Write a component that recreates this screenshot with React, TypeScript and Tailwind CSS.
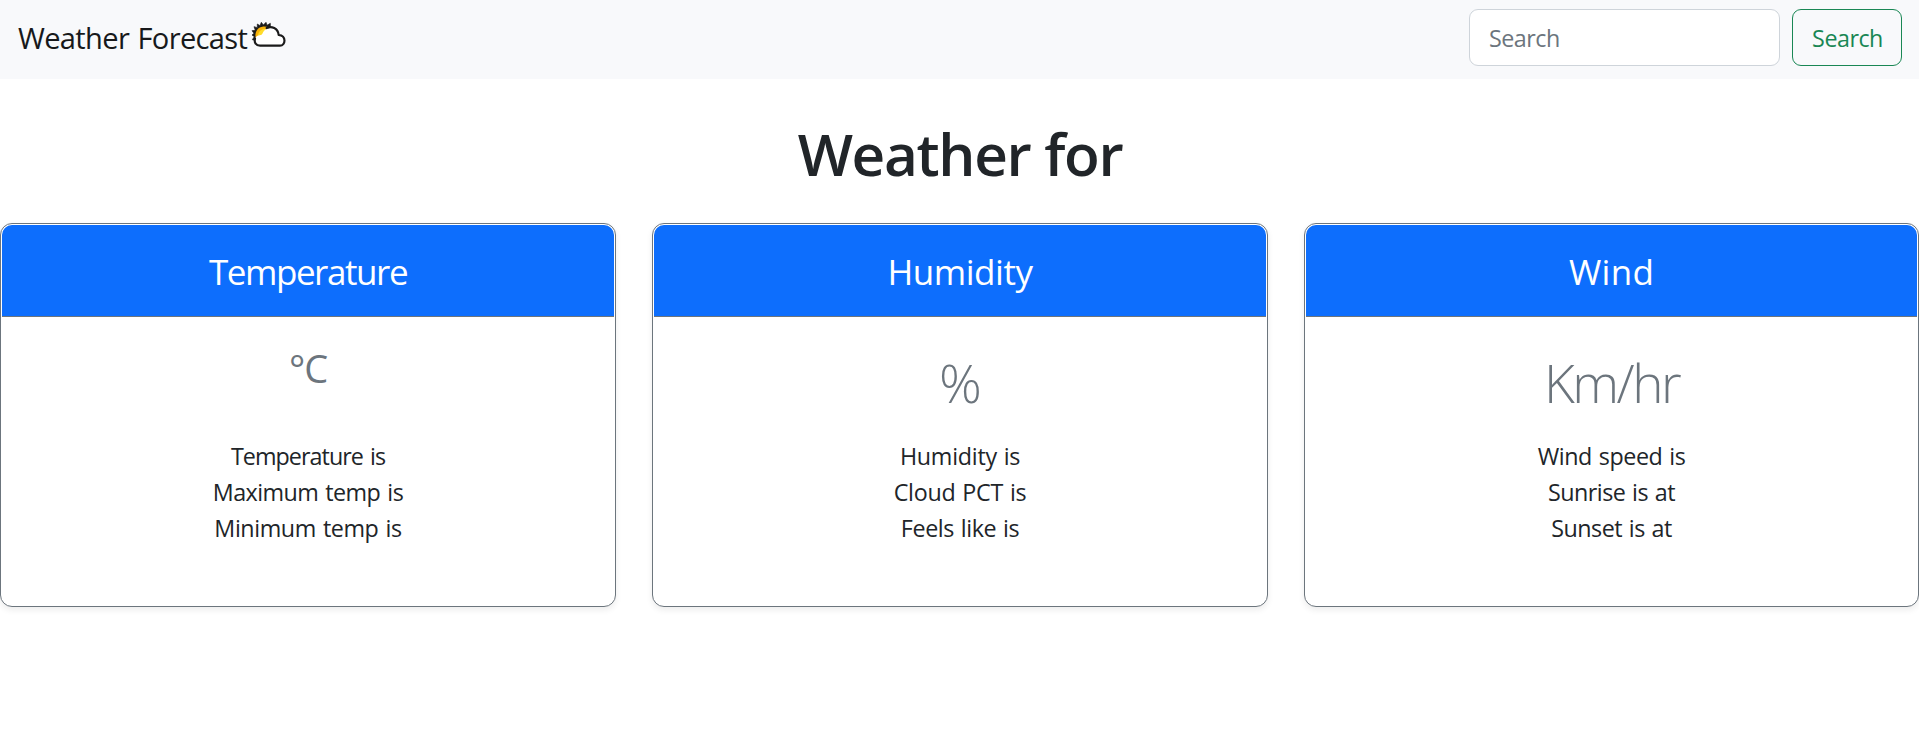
type Line = { text: string; className: string };
type Card = { title: Line; value: Line; lines: Line[] };

const cards: Card[] = [
  {
    title: { text: "Temperature", className: "tracking-[-1.44px]" },
    value: { text: "°C", className: "mt-7 mb-[46px] h-[47px] text-[38px] leading-[47px] tracking-[-1px]" },
    lines: [
      { text: "Temperature is", className: "tracking-[-0.95px] [word-spacing:2px]" },
      { text: "Maximum temp is", className: "tracking-[-0.55px] [word-spacing:1.5px]" },
      { text: "Minimum temp is", className: "tracking-[-0.43px] [word-spacing:1.5px]" },
    ],
  },
  {
    title: { text: "Humidity", className: "tracking-[-0.47px]" },
    value: { text: "%", className: "mt-[33px] mb-[23px] h-[65px] pl-px text-[53px] leading-[65px] font-light" },
    lines: [
      { text: "Humidity is", className: "tracking-[-0.26px] [word-spacing:1px]" },
      { text: "Cloud PCT is", className: "tracking-[-0.25px] [word-spacing:1px]" },
      { text: "Feels like is", className: "tracking-[-0.38px] [word-spacing:1px]" },
    ],
  },
  {
    title: { text: "Wind", className: "tracking-[0.3px]" },
    value: {
      text: "Km/hr",
      className: "mt-[33px] mb-[23px] h-[65px] text-[53px] leading-[65px] font-light tracking-[-2.5px]",
    },
    lines: [
      { text: "Wind speed is", className: "tracking-[-0.42px] [word-spacing:1.2px]" },
      { text: "Sunrise is at", className: "tracking-[-0.5px] [word-spacing:1.2px]" },
      { text: "Sunset is at", className: "tracking-[-0.5px] [word-spacing:1.2px]" },
    ],
  },
];

function SunCloud() {
  return (
    <svg viewBox="33 30 108 84" className="mt-1 ml-1 h-7 w-9 shrink-0" aria-hidden="true">
      <path
        d="M44 91 L37 89 L43 80 L36 75 L42 70 L36 62 L46 61 L42 50 L52 53 L52 42 L60 47 L64 37 L70 45 L78 37 L81 46 L91 40 L91 54 L70 78 Z"
        fill="#1b1b1b"
        stroke="#1b1b1b"
        strokeWidth="2"
        strokeLinejoin="round"
      />
      <path d="M47 83 C44 68 51 52 67 50 C74 49 81 50 87 53 L66 80 Z" fill="#f9b208" />
      <path d="M54 78 C54 66 62 57 76 56 L80 60 L64 80 Z" fill="#ffdc2b" />
      <path
        d="M60 107 C39 107 38 78 59 76 C64 76 66 74 68 70 C73 50 112 45 116 75 C141 76 138 107 120 107 Z"
        fill="#fff"
      />
      <path
        d="M80 54 C94 47 114 54 116 75 C140 77 137 107 120 107 H60 C48 107 42 98 45 86"
        fill="none"
        stroke="#1b1b1b"
        strokeWidth="6.5"
        strokeLinecap="round"
        strokeLinejoin="round"
      />
    </svg>
  );
}

function WeatherCard({ title, value, lines }: Card) {
  return (
    <section className="h-96 rounded-xl border border-[#6c757d] bg-white p-px text-center shadow-[0_3px_6px_rgba(0,0,0,0.075)]">
      <h2
        className={`flex h-[92px] justify-center rounded-t-[10px] border-b border-[#6c757d] bg-[#0d6efd] pt-[25px] text-[35px] leading-[43px] text-white ${title.className}`}
      >
        {title.text}
      </h2>
      <p className={`text-[#6c757d] ${value.className}`}>{value.text}</p>
      <ul>
        {lines.map((line) => (
          <li key={line.text} className={`h-9 leading-9 ${line.className}`}>
            {line.text}
          </li>
        ))}
      </ul>
    </section>
  );
}

export default function App() {
  return (
    <div className="min-h-[750px] bg-white font-['Open_Sans','Noto_Sans',sans-serif] text-[23.3px] text-[#212529]">
      <nav className="flex h-[79px] items-start justify-between bg-[#f8f9fb] pr-[17px] pl-[18px]">
        <div className="flex pt-4 text-[29.1px] leading-[45px] tracking-[-0.67px] text-[#17191b] [word-spacing:1.5px]">
          <span className="whitespace-nowrap">Weather Forecast</span>
          <SunCloud />
        </div>
        <form className="flex gap-3 pt-[9px]" onSubmit={(e) => e.preventDefault()}>
          <input
            type="search"
            placeholder="Search"
            className="h-[57px] w-[311px] rounded-[9px] border border-[#ced4da] bg-white px-[19px] tracking-[-0.5px] outline-none placeholder:text-[#6c757d]"
          />
          <button className="h-[57px] w-[110px] rounded-[9px] border border-[#198754] pt-0.5 pl-px tracking-[-0.5px] text-[#198754]">
            Search
          </button>
        </form>
      </nav>
      <h1 className="mt-[38px] mb-[34px] h-[72px] pl-px text-center text-[58.5px] leading-[72px] font-semibold tracking-[-1.35px]">
        Weather for
      </h1>
      <main className="grid grid-cols-[616px_616px_615px] gap-9">
        {cards.map((card) => (
          <WeatherCard key={card.title.text} {...card} />
        ))}
      </main>
    </div>
  );
}
